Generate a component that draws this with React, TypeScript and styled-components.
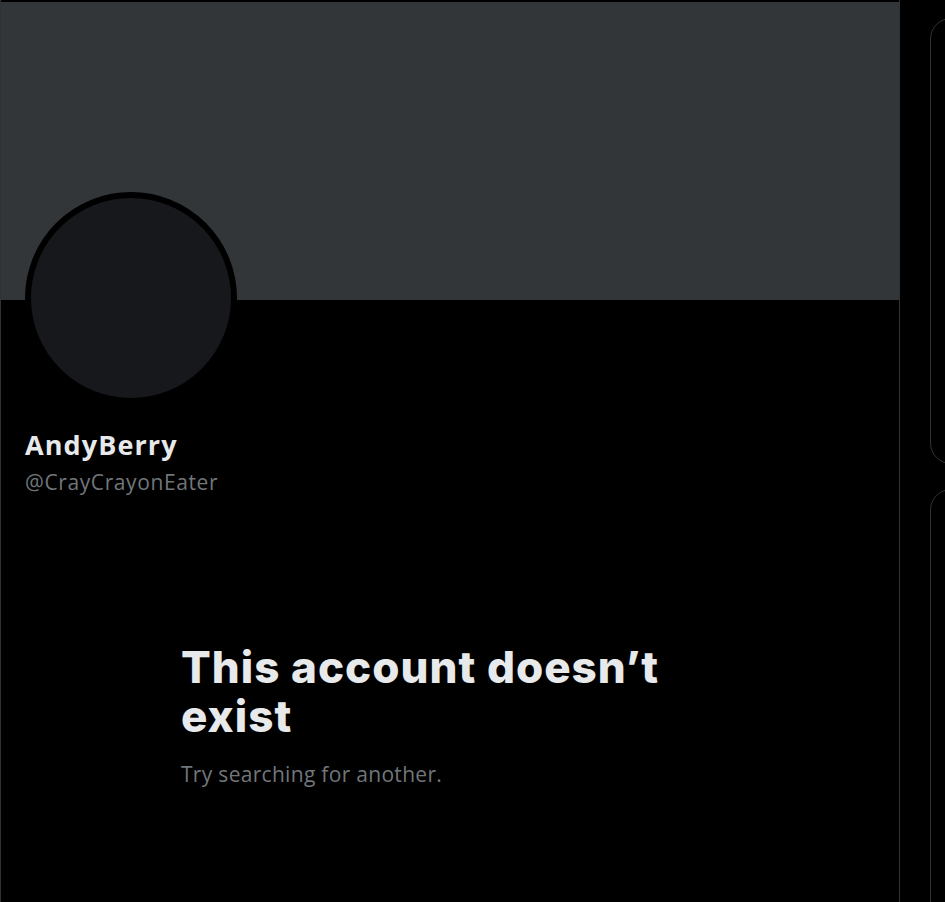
import React from "react";
import styled, { createGlobalStyle } from "styled-components";

const Global = createGlobalStyle`
  html, body { margin: 0; padding: 0; background: #000; }
  body { font-family: "Open Sans", "Noto Sans", "Liberation Sans", sans-serif; color: #e7e9ea; }
  #root { height: 902px; overflow: hidden; }
`;

const Page = styled.div`
  display: flex;
  height: 902px;
  background: #000;
`;

const Main = styled.main`
  width: 898px;
  flex: none;
  border-left: 1px solid #2f3336;
  border-right: 1px solid #2f3336;
  padding-top: 2px;
  display: flex;
  flex-direction: column;
`;

const Banner = styled.div`
  height: 298px;
  background: #333639;
`;

const ProfileHead = styled.div`
  padding: 0 24px;
  display: flex;
  flex-direction: column;
`;

const Avatar = styled.div`
  width: 200px;
  height: 200px;
  margin-top: -108px;
  border-radius: 50%;
  border: 6px solid #000;
  background: #16181c;
`;

const Name = styled.div`
  margin-top: 24px;
  font-size: 27px;
  font-weight: 700;
  line-height: 34px;
  letter-spacing: 1.1px;
  color: #e7e9ea;
`;

const Handle = styled.div`
  font-size: 21px;
  line-height: 40px;
  letter-spacing: 0.6px;
  color: #71767b;
`;

const Empty = styled.section`
  padding: 141px 0 0 180px;
  width: 560px;
  display: flex;
  flex-direction: column;
`;

const Headline = styled.h1`
  margin: 0;
  font-family: "Inter", "Open Sans", sans-serif;
  font-weight: 800;
  font-size: 44px;
  line-height: 49px;
  letter-spacing: 1px;
  color: #e7e9ea;
`;

const Sub = styled.p`
  margin: 20px 0 0;
  font-size: 21px;
  line-height: 26px;
  letter-spacing: 0.3px;
  color: #71767b;
`;

const Sidebar = styled.aside`
  flex: 1;
  padding: 18px 0 0 30px;
  display: flex;
  flex-direction: column;
  gap: 25px;
  overflow: hidden;
`;

const Card = styled.div<{ $h: number }>`
  box-sizing: border-box;
  height: ${(p) => p.$h}px;
  width: 400px;
  border: 1px solid #2f3336;
  border-radius: 21px;
  flex: none;
`;

export default function App() {
  return (
    <>
      <Global />
      <Page>
        <Main>
          <Banner />
          <ProfileHead>
            <Avatar />
            <Name>AndyBerry</Name>
            <Handle>@CrayCrayonEater</Handle>
          </ProfileHead>
          <Empty>
            <Headline>This account doesn’t exist</Headline>
            <Sub>Try searching for another.</Sub>
          </Empty>
        </Main>
        <Sidebar>
          <Card $h={446} />
          <Card $h={600} />
        </Sidebar>
      </Page>
    </>
  );
}
